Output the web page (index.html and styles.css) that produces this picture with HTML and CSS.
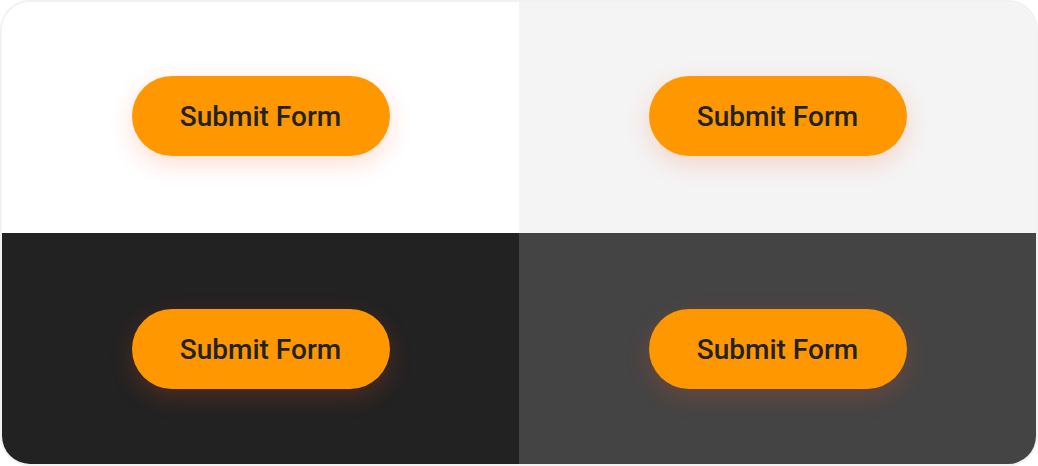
FILE: index.html
```html
<!DOCTYPE html>
<html lang="en">
<head>
    <meta charset="UTF-8">
    <meta name="viewport" content="width=device-width, initial-scale=1.0">
    <title>Submit Form buttons</title>
    <link rel="stylesheet" href="styles.css">
</head>
<body>
    <div class="board">
        <div class="cell top light">
            <button class="submit">Submit Form</button>
        </div>
        <div class="cell top soft">
            <button class="submit">Submit Form</button>
        </div>
        <div class="cell bottom dark">
            <button class="submit">Submit Form</button>
        </div>
        <div class="cell bottom grey">
            <button class="submit">Submit Form</button>
        </div>
    </div>
</body>
</html>
```

FILE: styles.css
```css
html, body {
    margin: 0;
    padding: 0;
    background: #fff;
}
body {
    font-family: Roboto, "Noto Sans", sans-serif;
}
.board {
    width: 1038px;
    height: 466px;
    box-sizing: border-box;
    border: 2px solid #f1f1f1;
    border-radius: 30px;
    overflow: hidden;
    display: grid;
    grid-template-columns: 517px 517px;
    grid-template-rows: 231px 231px;
}
.cell {
    display: flex;
    align-items: center;
    justify-content: center;
    box-sizing: border-box;
}
.top {
    padding-bottom: 3px;
}
.bottom {
    padding-top: 1px;
}
.light {
    background: #fff;
}
.soft {
    background: #f4f4f4;
}
.dark {
    background: #222;
}
.grey {
    background: #444;
}
.submit {
    width: 258px;
    height: 80px;
    border: none;
    border-radius: 40px;
    background: #ff9800;
    color: #222;
    font-family: Roboto, sans-serif;
    font-weight: 500;
    font-size: 28px;
    box-shadow: 0 8px 24px rgba(255, 87, 34, 0.2);
    cursor: pointer;
}
```
